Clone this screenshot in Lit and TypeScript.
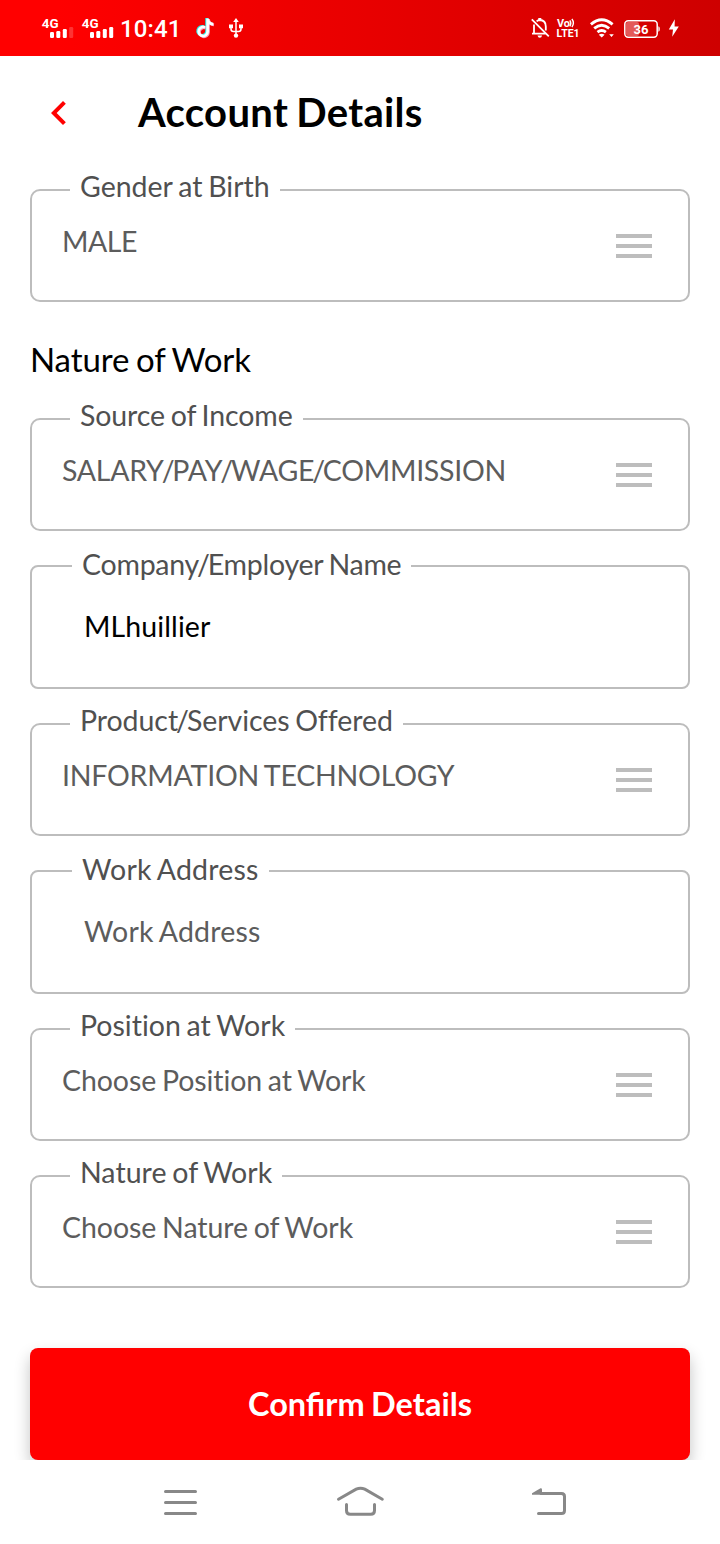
import { LitElement, html, css, svg } from "lit";
import { customElement, property } from "lit/decorators.js";
import { styleMap } from "lit/directives/style-map.js";

const signal = (full: boolean) => svg`
  <text x="-.3" y="10" font-size="13.2" textLength="16.8" lengthAdjust="spacingAndGlyphs">4G</text>
  <rect x="8" y="14" width="4" height="6" rx="1.2" />
  <rect x="14.3" y="13" width="4" height="7" rx="1.2" />
  <rect x="20.8" y="11" width="4" height="9" rx="1.2" />
  <rect x="27.2" y="9" width="4" height="11" rx="1.2" opacity=${full ? 1 : 0.2} />`;

const note = "M8 9.4A4.5 4.5 0 1 0 10.6 13.6V.6C11 3.8 13 5.9 16.2 6.2";

@customElement("status-bar")
export class StatusBar extends LitElement {
  static styles = css`
    :host {
      display: flex;
      justify-content: space-between;
      align-items: flex-start;
      box-sizing: border-box;
      height: 56px;
      padding: 18px 40px 0 42px;
      background: linear-gradient(90deg, #ff0000, #ff0000 8%, #ce0000);
      color: #fff;
      font-family: Roboto, sans-serif;
    }
    .group { display: flex; }
    svg { display: block; flex: none; fill: #fff; overflow: visible; }
    svg text { font-family: Roboto, sans-serif; font-weight: 700; }
    .sim { width: 40px; height: 20px; }
    .time {
      width: 77px;
      margin-left: -2px;
      font-size: 24px;
      line-height: 22px;
      font-weight: 500;
      letter-spacing: 0.1px;
    }
    .usb { margin-left: 14px; }
    .lte { margin-left: 7px; }
    .wifi { margin-left: 10px; }
    .battery { margin-left: 10px; }
    .bolt { margin-left: 8px; }
  `;

  render() {
    return html`
      <div class="group">
        <svg class="sim" viewBox="0 0 40 20">${signal(false)}</svg>
        <svg class="sim" viewBox="0 0 40 20">${signal(true)}</svg>
        <div class="time">10:41</div>
        <svg width="18" height="20" viewBox="0 0 18 20">
          <g fill="none" stroke-width="2.9">
            <path d=${note} stroke="#25f4ee" transform="translate(-.9 -.5)" />
            <path d=${note} stroke="#f5a3c0" transform="translate(.8 .7)" />
            <path d=${note} stroke="#fff" stroke-width="2.7" />
          </g>
        </svg>
        <svg class="usb" width="14" height="20" viewBox="0 0 14 20">
          <path d="M7 0l2.8 4H4.2zM0 6.5h4v3.8H0zM10 6.5h4v3.8h-4z" />
          <circle cx="7" cy="17.6" r="2.2" />
          <path d="M7 3v14M2 9v2q0 2.5 2.4 2.5H9.6Q12 13.5 12 11V9" fill="none" stroke="#fff" stroke-width="1.5" />
        </svg>
      </div>
      <div class="group">
        <svg width="19" height="20" viewBox="0 0 19 20">
          <path d="M3 6.5V15M1 15.7H14.8M5.6 3.3Q7 2 8.8 2Q14.8 2.3 14.8 8.5V12.5M.8 1.3L17.8 18.3" fill="none" stroke="#fff" stroke-width="1.8" />
          <path d="M7.3 0h3v2h-3zM6.5 17.5h4.6q-.5 2.2-2.3 2.2t-2.3-2.2z" />
        </svg>
        <svg class="lte" width="23" height="20" viewBox="0 0 23 20">
          <text x="0" y="9" font-size="10.4" textLength="13" lengthAdjust="spacingAndGlyphs">Vo</text>
          <path d="M12.8 2.4q2 2.8 0 6M14.9 1q3 4 0 8" fill="none" stroke="#fff" stroke-width="1.4" />
          <text x="-.4" y="19" font-size="10.4" textLength="23" lengthAdjust="spacingAndGlyphs">LTE1</text>
        </svg>
        <svg class="wifi" width="24" height="20" viewBox="0 0 24 20">
          <path d="M.9 6.4Q11.7-3 22.6 6.4M4.2 10.4Q11.7 4 19.2 10.4M7.5 14.2Q11.7 10.8 15.9 14.2" fill="none" stroke="#fff" stroke-width="2.8" />
          <path d="M8.8 16.8Q11.7 14.8 14.6 16.8L11.7 19.5zM19.2 16.3h4.6L21.5 19z" />
        </svg>
        <svg class="battery" width="36" height="20" viewBox="0 0 36 20">
          <rect x="2" y="4" width="13" height="14" rx="2" opacity=".35" />
          <rect x=".8" y="2.8" width="32.4" height="16.4" rx="3.4" fill="none" stroke="#fff" stroke-width="1.5" />
          <path d="M34.4 8.2q1.4.3 1.4 2.8t-1.4 2.8z" />
          <text x="17" y="16" font-size="13" text-anchor="middle">36</text>
        </svg>
        <svg class="bolt" width="12" height="20" viewBox="0 0 12 20">
          <path d="M6.8 1.2L.8 11.4H5L4.2 18.8L10.8 8.4H6.6z" />
        </svg>
      </div>`;
  }
}

// Slashes sit tight against their neighbours.
const tightSlashes = (text: string) =>
  text.split("/").map((part, i) => (i ? html`<span class="slash">/</span>${part}` : part));

@customElement("form-field")
export class FormField extends LitElement {
  @property() label = "";
  @property() value = "";
  @property() placeholder = "";
  @property({ reflect: true }) kind = "select";
  @property({ type: Number }) labelTracking = 0;
  @property({ type: Number }) valueTracking = 0;

  static styles = css`
    :host {
      display: flex;
      justify-content: space-between;
      box-sizing: border-box;
      height: 113px;
      padding: 0 30px;
      border: 2px solid #bdbdbd;
      border-radius: 10px;
      font-size: 28.5px;
      line-height: 34px;
      word-spacing: -1.5px;
      color: #5c5c5c;
    }
    :host([kind="input"]) { height: 124px; padding: 0 40px; border-radius: 8px; }
    .column { display: flex; flex-direction: column; align-items: flex-start; }
    .label {
      margin: -22px 0 0 8px;
      padding: 0 10px;
      background: #fff;
      color: #505050;
      white-space: nowrap;
      font-variant-ligatures: none;
    }
    .value { margin-top: 21px; white-space: nowrap; font-variant-ligatures: none; }
    .slash { margin: 0 -2px; }
    .icon { display: block; align-self: center; fill: #bdbdbd; }
    :host([kind="input"]) .label { margin: -20px 0 0; }
    :host([kind="input"]) .value { margin: 28px 0 0 12px; }
    :host([kind="input"]) .filled { color: #000; }
  `;

  render() {
    return html`
      <div class="column">
        <div class="label" style=${styleMap({ letterSpacing: `${this.labelTracking}px` })}>${tightSlashes(this.label)}</div>
        <div class="value ${this.value ? "filled" : ""}" style=${styleMap({ letterSpacing: `${this.valueTracking}px` })}>${tightSlashes(this.value || this.placeholder)}</div>
      </div>
      ${this.kind === "select"
        ? html`<svg class="icon" width="48" height="48" viewBox="0 0 24 24"><path d="M3 18h18v-2H3zM3 13h18v-2H3zM3 6v2h18V6z" /></svg>`
        : ""}`;
  }
}

@customElement("app-root")
export class AppRoot extends LitElement {
  static styles = css`
    :host {
      display: flex;
      flex-direction: column;
      height: 1544px;
      background: #fff;
      font-family: Lato, sans-serif;
    }
    .page {
      display: flex;
      flex-direction: column;
      height: 1404px;
      overflow: hidden;
    }
    .header { display: flex; align-items: center; height: 114px; padding-left: 35px; }
    .back { display: block; fill: #f00; }
    .title {
      margin: 0 0 2px 55px;
      font-size: 40px;
      line-height: 48px;
      font-weight: 700;
      letter-spacing: 0.34px;
      word-spacing: -2px;
    }
    .form { display: flex; flex-direction: column; gap: 34px; padding: 19px 30px 0; }
    .section {
      margin: 5px 0 7px;
      font-size: 33px;
      line-height: 36px;
      font-weight: 400;
      letter-spacing: -0.08px;
      word-spacing: -1.7px;
    }
    .confirm {
      height: 112px;
      margin: 60px 30px 0;
      padding: 0 0 1px;
      border: 0;
      border-radius: 8px;
      background: #f00;
      color: #fff;
      font: 700 32.5px/41px Lato, sans-serif;
      word-spacing: -1.5px;
      box-shadow: 0 8px 16px rgba(0, 0, 0, 0.24);
    }
    .nav { display: flex; height: 84px; }
    .nav svg { display: block; fill: none; stroke: #888; stroke-width: 3; stroke-linecap: round; }
  `;

  render() {
    return html`
      <status-bar></status-bar>
      <main class="page">
        <header class="header">
          <svg class="back" width="48" height="48" viewBox="0 0 24 24"><path d="M15.41 7.41L14 6l-6 6 6 6 1.41-1.41L10.83 12z" /></svg>
          <h1 class="title">Account Details</h1>
        </header>
        <div class="form">
          <form-field label="Gender at Birth" value="MALE" .valueTracking=${-0.5}></form-field>
          <h2 class="section">Nature of Work</h2>
          <form-field label="Source of Income" .labelTracking=${-0.1} value="SALARY/PAY/WAGE/COMMISSION" .valueTracking=${-0.26}></form-field>
          <form-field kind="input" label="Company/Employer Name" .labelTracking=${-0.24} value="MLhuillier" .valueTracking=${0.1}></form-field>
          <form-field label="Product/Services Offered" .labelTracking=${-0.06} value="INFORMATION TECHNOLOGY" .valueTracking=${-0.22}></form-field>
          <form-field kind="input" label="Work Address" .labelTracking=${0.2} placeholder="Work Address" .valueTracking=${0.2}></form-field>
          <form-field label="Position at Work" placeholder="Choose Position at Work" .valueTracking=${-0.08}></form-field>
          <form-field label="Nature of Work" .labelTracking=${0.04} placeholder="Choose Nature of Work" .valueTracking=${-0.05}></form-field>
        </div>
        <button class="confirm">Confirm Details</button>
      </main>
      <nav class="nav">
        <svg width="720" height="84" viewBox="0 1460 720 84">
          <path d="M165.5 1491.5H195.5M165.5 1502.5H195.5M165.5 1513.5H195.5" />
          <path d="M338.5 1499.3L356.2 1489.2Q360.5 1487.2 364.8 1489.2L382.3 1499.3M346.5 1504.5V1510.5Q346.5 1514.3 350.3 1514.3H370.7Q374.5 1514.3 374.5 1510.5V1504.5" />
          <path d="M538.5 1513.5H561.5Q564.5 1513.5 564.5 1510.5V1496.5Q564.5 1493.5 561.5 1493.5H541" />
          <path d="M532 1494.8V1493.2L540.5 1488.2Q542 1488 542 1489.5V1494.8z" fill="#888" stroke="none" />
        </svg>
      </nav>`;
  }
}
